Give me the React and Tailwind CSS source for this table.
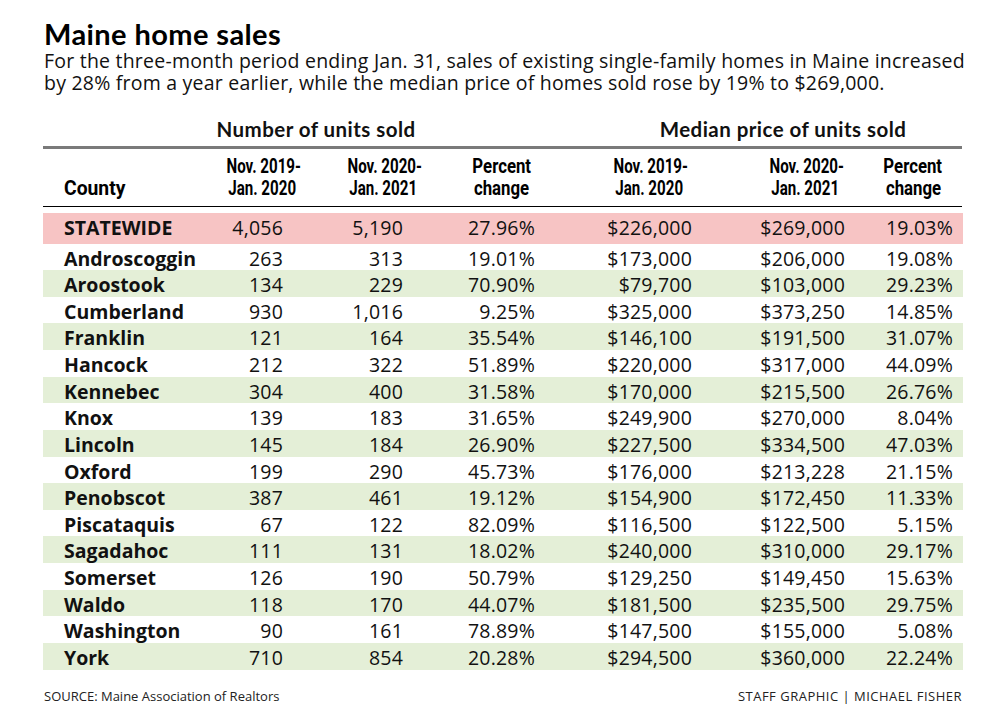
const ROWS = [
  ['Androscoggin', '263', '313', '19.01%', '$173,000', '$206,000', '19.08%'],
  ['Aroostook', '134', '229', '70.90%', '$79,700', '$103,000', '29.23%'],
  ['Cumberland', '930', '1,016', '9.25%', '$325,000', '$373,250', '14.85%'],
  ['Franklin', '121', '164', '35.54%', '$146,100', '$191,500', '31.07%'],
  ['Hancock', '212', '322', '51.89%', '$220,000', '$317,000', '44.09%'],
  ['Kennebec', '304', '400', '31.58%', '$170,000', '$215,500', '26.76%'],
  ['Knox', '139', '183', '31.65%', '$249,900', '$270,000', '8.04%'],
  ['Lincoln', '145', '184', '26.90%', '$227,500', '$334,500', '47.03%'],
  ['Oxford', '199', '290', '45.73%', '$176,000', '$213,228', '21.15%'],
  ['Penobscot', '387', '461', '19.12%', '$154,900', '$172,450', '11.33%'],
  ['Piscataquis', '67', '122', '82.09%', '$116,500', '$122,500', '5.15%'],
  ['Sagadahoc', '111', '131', '18.02%', '$240,000', '$310,000', '29.17%'],
  ['Somerset', '126', '190', '50.79%', '$129,250', '$149,450', '15.63%'],
  ['Waldo', '118', '170', '44.07%', '$181,500', '$235,500', '29.75%'],
  ['Washington', '90', '161', '78.89%', '$147,500', '$155,000', '5.08%'],
  ['York', '710', '854', '20.28%', '$294,500', '$360,000', '22.24%'],
]

const COLS = 'grid grid-cols-[170px_70px_120px_132px_157px_153px_108px] pr-[10px]'

function Row({ row, bg, tall }) {
  return (
    <div className={`${COLS} items-center ${bg} ${tall ? 'h-[31px]' : 'h-[26.625px]'} text-[19.5px] text-[#111] font-['Open_Sans',sans-serif]`}>
      <div className="pl-[21px] font-bold whitespace-nowrap">{row[0]}</div>
      {row.slice(1).map((v, i) => (
        <div key={i} className="text-right font-normal tracking-[0.2px]">{v}</div>
      ))}
    </div>
  )
}

// narrow headline face, squeezed from Roboto bold
function Cond({ children, scale = 'scale-x-[0.8]', origin = 'origin-center' }) {
  return <span className={`inline-block whitespace-nowrap ${scale} ${origin}`}>{children}</span>
}

function HeadCell({ top, bottom, pct }) {
  const scale = pct ? 'scale-x-[0.8]' : 'scale-x-[0.72]'
  return (
    <div className="w-[100px] text-center leading-[22px]">
      <div><Cond scale={scale}>{top}</Cond></div>
      <div><Cond scale={scale}>{bottom}</Cond></div>
    </div>
  )
}

export default function App() {
  return (
    <div className="w-[1000px] h-[722px] bg-white text-[#111] font-['Lato',sans-serif] overflow-hidden">
      <div className="pl-[44px] pt-[19px]">
        <h1 className="text-[29px] font-bold leading-[30px] text-black tracking-[0.4px]">Maine home sales</h1>
        <p className="text-[19.5px] leading-[22px] whitespace-nowrap mt-[1px] font-['Open_Sans',sans-serif] tracking-[0.22px]">
          For the three-month period ending Jan. 31, sales of existing single-family homes in Maine increased
          <br />
          by 28% from a year earlier, while the median price of homes sold rose by 19% to $269,000.
        </p>
      </div>

      <div className="ml-[43px] w-[920px] mt-[23px]">
        <div className="flex text-[20.5px] font-bold leading-[24px] pb-[5px] tracking-[0.45px]">
          <div className="ml-[123px] w-[300px] text-center">Number of units sold</div>
          <div className="ml-[167px] w-[300px] text-center">Median price of units sold</div>
        </div>
        <div className="h-[2.5px] bg-[#7a7a7a] mr-[1px]" />

        <div className="flex items-end h-[57px] pb-[7px] text-[21px] font-bold text-black font-['Roboto',sans-serif]">
          <div className="w-[21px]" />
          <div className="w-[100px] leading-[22px]"><Cond scale="scale-x-[0.92]" origin="origin-left">County</Cond></div>
          <div className="w-[48px]" />
          <HeadCell top="Nov. 2019-" bottom="Jan. 2020" />
          <div className="w-[21px]" />
          <HeadCell top="Nov. 2020-" bottom="Jan. 2021" />
          <div className="w-[19px]" />
          <HeadCell top="Percent" bottom="change" pct />
          <div className="w-[48px]" />
          <HeadCell top="Nov. 2019-" bottom="Jan. 2020" />
          <div className="w-[56px]" />
          <HeadCell top="Nov. 2020-" bottom="Jan. 2021" />
          <div className="w-[8px]" />
          <HeadCell top="Percent" bottom="change" pct />
        </div>
        <div className="h-[1.5px] bg-black mr-[1px]" />

        <div className="mt-[5.5px]">
          <Row row={['STATEWIDE', '4,056', '5,190', '27.96%', '$226,000', '$269,000', '19.03%']} bg="bg-[#f7c4c4]" tall />
          {ROWS.map((r, i) => (
            <Row key={r[0]} row={r} bg={i % 2 ? 'bg-[#e4efd7]' : 'bg-white'} />
          ))}
        </div>

        <div className="flex justify-between items-center mt-[18px] text-[13px] leading-[16px] text-[#222] ml-[1px] mr-[1px] font-['Open_Sans',sans-serif]">
          <span>SOURCE: Maine Association of Realtors</span>
          <span className="tracking-[0.5px]">STAFF GRAPHIC | MICHAEL FISHER</span>
        </div>
      </div>
    </div>
  )
}
